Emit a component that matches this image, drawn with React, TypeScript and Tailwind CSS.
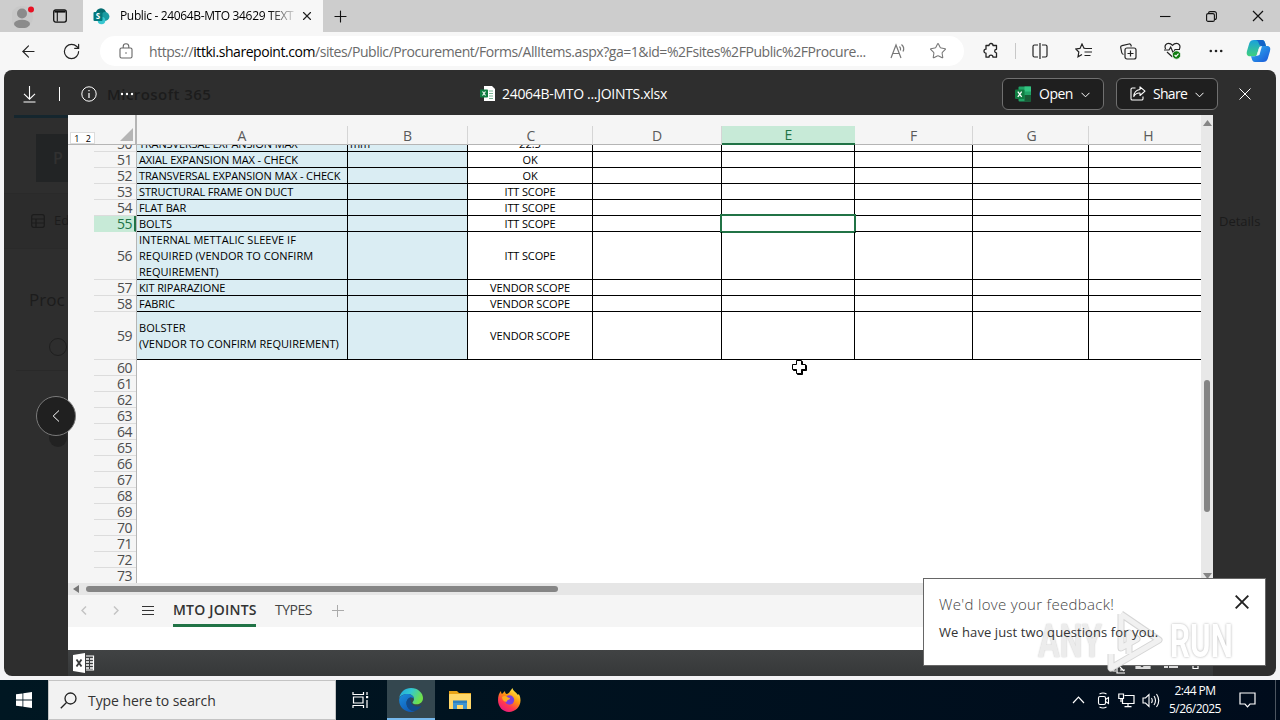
import React from "react";
import { Plus, X, ArrowLeft, RotateCw, Star } from "lucide-react";

const COLS = [
  { id: "A", w: "w-[211px]" },
  { id: "B", w: "w-[120px]" },
  { id: "C", w: "w-[125px]" },
  { id: "D", w: "w-[129px]" },
  { id: "E", w: "w-[133px]" },
  { id: "F", w: "w-[118px]" },
  { id: "G", w: "w-[116px]" },
  { id: "H", w: "w-[112px]" },
];

type Row = { n: number; h: string; a: string[]; b?: string; c: string };

const ROWS: Row[] = [
  { n: 51, h: "h-4", a: ["AXIAL EXPANSION MAX - CHECK"], c: "OK" },
  { n: 52, h: "h-4", a: ["TRANSVERSAL EXPANSION MAX - CHECK"], c: "OK" },
  { n: 53, h: "h-4", a: ["STRUCTURAL FRAME ON DUCT"], c: "ITT SCOPE" },
  { n: 54, h: "h-4", a: ["FLAT BAR"], c: "ITT SCOPE" },
  { n: 55, h: "h-4", a: ["BOLTS"], c: "ITT SCOPE" },
  {
    n: 56,
    h: "h-12",
    a: ["INTERNAL METTALIC SLEEVE IF", "REQUIRED (VENDOR TO CONFIRM", "REQUIREMENT)"],
    c: "ITT SCOPE",
  },
  { n: 57, h: "h-4", a: ["KIT RIPARAZIONE"], c: "VENDOR SCOPE" },
  { n: 58, h: "h-4", a: ["FABRIC"], c: "VENDOR SCOPE" },
  { n: 59, h: "h-12", a: ["BOLSTER", "(VENDOR TO CONFIRM REQUIREMENT)"], c: "VENDOR SCOPE" },
];

const EMPTY = [60, 61, 62, 63, 64, 65, 66, 67, 68, 69, 70, 71, 72, 73];

function SharePointIcon() {
  return (
    <svg width="17" height="17" viewBox="0 0 17 17">
      <circle cx="8" cy="5.5" r="5.2" fill="#036c70" />
      <circle cx="12" cy="8.5" r="4.4" fill="#1a9ba1" />
      <circle cx="8.5" cy="12.5" r="3.8" fill="#37c6d0" />
      <rect x="0.5" y="4" width="9" height="9" rx="1" fill="#03787c" />
      <text x="5" y="11.4" fontSize="8" fontWeight="700" fill="#fff" textAnchor="middle" fontFamily="Open Sans, sans-serif">
        S
      </text>
    </svg>
  );
}

function TabStrip() {
  return (
    <div className="flex h-8 shrink-0 items-stretch bg-[#cdcdcd]">
      <div className="flex w-[83px] items-center rounded-br-md">
        <svg className="ml-3 mt-[-2px]" width="24" height="26" viewBox="0 0 24 26">
          <circle cx="10" cy="15" r="11" fill="#c3c3c3" opacity="0.5" />
          <circle cx="10" cy="11.5" r="5" fill="#8b8b8b" />
          <ellipse cx="10" cy="22" rx="8" ry="4.2" fill="#8b8b8b" />
          <circle cx="19" cy="7.5" r="3" fill="#e81123" />
        </svg>
        <svg className="ml-[17px]" width="14" height="14" viewBox="0 0 14 14" fill="none" stroke="#111" strokeWidth="1.3">
          <rect x="0.7" y="0.9" width="12.6" height="12.2" rx="2" />
          <path d="M1.500 2.500H12.500" strokeWidth="2.200" />
          <path d="M4.300 3V12.500" strokeWidth="1.100" />
        </svg>
      </div>
      <div className="flex w-60 items-center bg-[#f7f7f7] pl-[10px]">
        <SharePointIcon />
        <div className="ml-[10px] w-[175px] overflow-hidden whitespace-nowrap bg-gradient-to-r from-black from-85% to-black/10 bg-clip-text text-[12px] leading-5 tracking-[-0.35px] text-transparent">
          Public - 24064B-MTO 34629 TEXT
        </div>
        <X className="ml-[5px]" size={14} strokeWidth={2} color="#222" />
      </div>
      <div className="flex w-[34px] items-center justify-center">
        <Plus size={19} strokeWidth={1.4} color="#111" />
      </div>
      <div className="flex flex-1 items-center justify-end gap-[35px] pr-[16px]">
        <svg width="11" height="11" viewBox="0 0 11 11" stroke="#111" strokeWidth="1.1">
          <path d="M0 5.500H10.500" />
        </svg>
        <svg width="11" height="11" viewBox="0 0 11 11" fill="none" stroke="#111" strokeWidth="1.1">
          <rect x="0.6" y="2.6" width="7.8" height="7.8" rx="1.5" />
          <path d="M2.6 2.4V2a1.4 1.4 0 0 1 1.4-1.4h4.4a2 2 0 0 1 2 2V7A1.4 1.4 0 0 1 9 8.4" />
        </svg>
        <svg width="12" height="12" viewBox="0 0 12 12" stroke="#111" strokeWidth="1.2">
          <path d="M1 1 11 11M11 1 1 11" />
        </svg>
      </div>
    </div>
  );
}

function CopilotIcon() {
  return (
    <svg width="25" height="24" viewBox="0 0 25 24">
      <defs>
        <linearGradient id="cpA" x1="0" y1="0" x2="0" y2="1">
          <stop offset="0" stopColor="#1aa0dc" />
          <stop offset="1" stopColor="#3fd07d" />
        </linearGradient>
        <linearGradient id="cpB" x1="0" y1="0" x2="1" y2="1">
          <stop offset="0" stopColor="#2fb4f0" />
          <stop offset="1" stopColor="#1a56d8" />
        </linearGradient>
      </defs>
      <path d="M8 1h8c2 0 2.700 1.500 3.200 3.200L20 7h-4c-2 0-2.800 1-3.400 3l-1.500 5c-.5 1.500-1.200 2.300-3 2.300H4C.7 17.300.3 14.500 1 12l2.200-7.500C4 2 5.500 1 8 1z" fill="url(#cpA)" />
      <path d="M8 1h8c2 0 2.700 1.500 3.200 3.200L20 7h-4c-1.500 0-2.300-.4-3-2.300C12.300 2.500 11.500 1 8 1z" fill="#1464c8" />
      <path d="M17 23H9c-2 0-2.700-1.500-3.200-3.200L5 17.300h3.500c2 0 2.800-1 3.400-3l1.500-5c.5-1.500 1.200-2.300 3-2.300H21c3.300 0 3.700 2.500 3 5l-2.200 7.500C21 22 19.500 23 17 23z" fill="url(#cpB)" />
      <path d="M13.500 8 16 7l-2.600 9-2.900 1z" fill="#f7f7f7" />
    </svg>
  );
}

function AddressBar() {
  return (
    <div className="flex h-[38px] shrink-0 items-center bg-[#f7f7f7] pl-[19px]">
      <ArrowLeft size={19} strokeWidth={1.4} color="#222" />
      <RotateCw className="ml-6" size={19} strokeWidth={1.5} color="#222" />
      <div className="ml-[19px] flex h-[30px] w-[864px] items-center rounded-full bg-white pl-[19px]">
        <svg width="14" height="16" viewBox="0 0 14 16" fill="none" stroke="#666" strokeWidth="1.1">
          <rect x="1" y="5" width="12" height="10" rx="1.500" />
          <path d="M4.200 5V3.500a2.800 2.800 0 0 1 5.600 0V5" />
          <circle cx="7" cy="10" r="0.800" fill="#666" stroke="none" />
        </svg>
        <div className="ml-[16px] mt-px w-[720px] whitespace-nowrap text-[14px] leading-5 tracking-[-0.440px] text-[#6a6a6a]">
          https://<span className="text-black">ittki.sharepoint.com</span>
          /sites/Public/Procurement/Forms/AllItems.aspx?ga=1&amp;id=%2Fsites%2FPublic%2FProcure...
        </div>
        <svg className="ml-[21px]" width="17" height="16" viewBox="0 0 17 16" fill="none" stroke="#777" strokeWidth="1.2">
          <path d="M1 15 6 2 11 15M2.800 10.500H9.200M9.500 3.500q1.500 1.500 1 4M11.500 1.500q3.500 3 1.500 7" />
        </svg>
        <Star className="ml-[22px]" size={18} strokeWidth={1.400} color="#777" />
      </div>
      <svg className="ml-[19px]" width="16" height="18" viewBox="0 0 16 18" fill="none" stroke="#222" strokeWidth="1.300">
        <path d="M3 3.500h3a2 2 0 1 1 4 0h3.500v3.800a1.800 1.800 0 1 0 0 3.600v4.300H10a2 2 0 1 0-4 0H3v-4a2 2 0 1 1 0-4z" strokeLinejoin="round" />
      </svg>
      <div className="ml-[16px] h-4 w-px bg-[#c8c8c8]" />
      <svg className="ml-[16px]" width="16" height="16" viewBox="0 0 16 16" fill="none" stroke="#222" strokeWidth="1.200">
        <path d="M6 2H2.500Q1 2 1 3.500v9Q1 14 2.500 14H6M10 2h3.500Q15 2 15 3.500v9q0 1.500-1.500 1.500H10M8 0V16" />
      </svg>
      <svg className="ml-[27px]" width="18" height="16" viewBox="0 0 18 16" fill="none" stroke="#222" strokeWidth="1.200">
        <path d="M10.500 5.500 9 5.200 7 1 5 5.400.8 6l3 3-.8 4.800L7 11.500M10.500 5.500H17M9.500 9H17M9.500 12.500H15.500" />
      </svg>
      <svg className="ml-[27px]" width="17" height="17" viewBox="0 0 17 17" fill="none" stroke="#222" strokeWidth="1.200">
        <path d="M3.500 11.500Q2 11 1.700 9.500L.7 4.500Q.5 3 2 2.700L9 1q1.600-.2 2 1.200l.3 1.300" />
        <rect x="5" y="5" width="11" height="11" rx="2" />
        <path d="M10.500 7.500v6M7.500 10.500h6" />
      </svg>
      <svg className="ml-[27px]" width="18" height="18" viewBox="0 0 18 18" fill="none" stroke="#222" strokeWidth="1.200">
        <path d="M1.600 7C0 3.500 2.300 1.300 4.500 1.300c2 0 3.200 1 4 2 .8-1 2-2 4-2C14.700 1.300 17 3.500 15.400 7M0 8H5l1.700-3 2.600 6L11 7.500h5M3 10l5.500 5" />
        <circle cx="12.500" cy="13" r="4.200" fill="#107c10" stroke="#f7f7f7" strokeWidth="0.800" />
        <path d="M10.600 13l1.400 1.400 2.500-2.700" stroke="#fff" />
      </svg>
      <svg className="ml-[27px]" width="14" height="4" viewBox="0 0 14 4" fill="#222">
        <circle cx="1.800" cy="2" r="1.300" />
        <circle cx="7" cy="2" r="1.300" />
        <circle cx="12.200" cy="2" r="1.300" />
      </svg>
      <div className="ml-[23px]">
        <CopilotIcon />
      </div>
    </div>
  );
}

function Chevron() {
  return (
    <svg className="mt-[2px]" width="9" height="6" viewBox="0 0 9 6" fill="none" stroke="#fff" strokeWidth="1">
      <path d="M.5.8 4.500 4.800 8.500.8" />
    </svg>
  );
}

function ViewerHeader() {
  return (
    <div className="relative flex h-[45px] shrink-0 items-center pt-[2px] text-white">
      <div className="absolute left-[103px] top-[12px] text-[15px] font-semibold leading-6 tracking-[0.450px] text-[#1c1c1c]">
        Microsoft 365
      </div>
      <div className="relative flex w-[476px] items-center pl-[19px]">
        <svg width="13" height="18" viewBox="0 0 13 18" fill="none" stroke="#fff" strokeWidth="1.100">
          <path d="M6.500 1V14M1 8.800 6.500 14.200 12 8.800M.5 17H12.500" />
        </svg>
        <div className="ml-[23px] h-[14px] w-px bg-white" />
        <svg className="ml-[21px]" width="16" height="16" viewBox="0 0 16 16" fill="none" stroke="#fff" strokeWidth="1">
          <circle cx="8" cy="8" r="7.200" />
          <path d="M8 7v5M8 4v1.300" strokeWidth="1.200" />
        </svg>
        <svg className="ml-[23px]" width="14" height="4" viewBox="0 0 14 4" fill="#fff">
          <circle cx="2" cy="2" r="1.200" />
          <circle cx="7" cy="2" r="1.200" />
          <circle cx="12" cy="2" r="1.200" />
        </svg>
      </div>
      <svg width="15" height="15" viewBox="0 0 15 15">
        <path d="M4 0h8l3 3v12H4z" fill="#fff" />
        <path d="M9 5h4M9 7.500h4M9 10h4M9 12.500h4" stroke="#7ab795" strokeWidth="1" />
        <rect x="0" y="3.500" width="8" height="8" rx="0.800" fill="#107c41" />
        <path d="M2.500 5.500 5.500 9.500M5.500 5.500 2.500 9.500" stroke="#fff" strokeWidth="1.100" />
      </svg>
      <div className="ml-[7px] mt-[1px] w-[200px] whitespace-nowrap text-[14px] leading-5 tracking-[-0.300px]">
        24064B-MTO ...JOINTS.xlsx
      </div>
      <div className="flex-1" />
      <div className="flex h-8 w-[102px] items-center rounded-md border border-[#707070] bg-[#1f1f1f] pl-[12px]">
        <svg width="16" height="16" viewBox="0 0 16 16">
          <rect x="3.500" y="0.500" width="12.500" height="15" rx="1" fill="#21a366" />
          <rect x="9.500" y="0.500" width="6.500" height="5" fill="#33c481" />
          <rect x="9.500" y="9" width="6.500" height="6.500" fill="#185c37" />
          <rect x="0" y="3.500" width="9.500" height="9.500" rx="1" fill="#107c41" />
          <path d="M2.800 5.700 6.700 10.800M6.700 5.700 2.800 10.800" stroke="#fff" strokeWidth="1.300" />
        </svg>
        <span className="ml-[8px] w-[42px] text-[14px] leading-5 tracking-[-0.500px]">Open</span>
        <Chevron />
      </div>
      <div className="ml-3 flex h-8 w-[102px] items-center rounded-md border border-[#707070] bg-[#1f1f1f] pl-[13px]">
        <svg width="16" height="15" viewBox="0 0 16 15" fill="none" stroke="#fff" strokeWidth="1.100">
          <path d="M5.500 2H2.300Q1 2 1 3.300v9.400Q1 14 2.300 14h9.400Q13 14 13 12.700V10.500" />
          <path d="M10 .8 15 5.200 10 9.500V7Q6 6.500 3.800 10.500 4 4.500 10 3.500z" strokeLinejoin="round" />
        </svg>
        <span className="ml-[7px] w-[42px] text-[14px] leading-5 tracking-[-0.700px]">Share</span>
        <Chevron />
      </div>
      <svg className="ml-[21px] mr-[25px]" width="12" height="12" viewBox="0 0 12 12" stroke="#fff" strokeWidth="1">
        <path d="M.5.5 11.500 11.500M11.500.5.5 11.500" />
      </svg>
    </div>
  );
}

function LeftGutter() {
  return (
    <div className="flex w-16 shrink-0 flex-col overflow-hidden text-[#1c1c1c]">
      <div className="ml-[10px] h-[3px] bg-[#15262e]" />
      <div className="ml-8 mt-4 flex h-12 items-center bg-[#222425] pl-[17px] text-[16px] font-semibold text-[#313131]">
        P
      </div>
      <div className="mt-[11px] flex h-14 items-center whitespace-nowrap border-y border-[#2a2a2a] bg-[#2c2c2c] pl-[27px] text-[13px]">
        <svg className="mr-[9px] shrink-0" width="14" height="14" viewBox="0 0 14 14" fill="none" stroke="#1c1c1c" strokeWidth="1.200">
          <rect x="0.700" y="0.700" width="12.600" height="12.600" rx="2" />
          <path d="M1 5h12M1 9h12M5 5v8" />
        </svg>
        Ed
      </div>
      <div className="ml-[25px] mt-[39px] text-[17px] leading-6">Proc</div>
      <div className="ml-[45px] mt-[26px] size-[18px] shrink-0 rounded-full border border-[#1f1f1f]" />
      <div className="ml-3 mt-[14px] h-px shrink-0 bg-[#292929]" />
      <div className="ml-[45px] mt-[58px] size-[18px] shrink-0 rounded-full bg-[#222]" />
    </div>
  );
}

function RowLabel({ n, h, selected }: { n: number; h: string; selected?: boolean }) {
  return (
    <div className="flex w-[69px] shrink-0 border-r border-[#b5b5b5] bg-[#f5f5f5] pl-[26px]">
      <div
        className={
          "flex flex-1 items-center justify-end border-b text-[14px] leading-4 tracking-[-0.500px] " +
          h +
          (selected
            ? " border-r-2 border-b-[#c7ead7] border-r-[#217346] bg-[#c7ead7] pr-[2px] text-[#217346]"
            : " border-[#dcdcdc] pr-[4px] text-[#4d4d4d]")
        }
      >
        {n}
      </div>
    </div>
  );
}

function DataRow({ row }: { row: Row }) {
  const tall = row.a.length > 1;
  return (
    <div className={"flex shrink-0 " + row.h}>
      <RowLabel n={row.n} h={row.h} selected={row.n === 55} />
      {COLS.map((c, i) => (
        <div
          key={c.id}
          className={
            "relative flex shrink-0 flex-col justify-center whitespace-nowrap border-b border-black text-[11px] leading-4 text-black " +
            c.w +
            (i < 7 ? " border-r" : "") +
            (i < 2 ? " bg-[#daedf3] pl-[2px]" : " items-center")
          }
        >
          {i === 0 &&
            row.a.map((t) => (
              <div key={t} className={tall ? "tracking-[0.030px]" : "tracking-[-0.130px]"}>
                {t}
              </div>
            ))}
          {i === 1 && row.b}
          {i === 2 && <div className="tracking-[-0.130px]">{row.c}</div>}
          {i === 4 && row.n === 55 && (
            <div className="absolute -left-[2px] -top-[2px] h-[19px] w-[136px] border-2 border-[#217346]" />
          )}
        </div>
      ))}
    </div>
  );
}

function Sheet() {
  return (
    <div className="flex h-[468px] shrink-0">
      <div className="flex w-[1133px] flex-col overflow-hidden bg-white">
        <div className="flex h-[30px] shrink-0 items-end bg-[#f5f5f5]">
          <div className="flex h-full w-[69px] items-end border-b border-r-2 border-[#b5b5b5]">
            <div className="ml-[2px] flex h-[12px] w-[25px] items-center justify-around border border-[#dcdcdc] bg-white text-[9px] leading-none text-black">
              <span>1</span>
              <span>2</span>
            </div>
            <svg className="mb-[3px] ml-[25px]" width="13" height="13" viewBox="0 0 13 13">
              <path d="M13 0V13H0z" fill="#b5b5b5" />
            </svg>
          </div>
          {COLS.map((c, i) => (
            <div
              key={c.id}
              className={
                "flex h-[19px] shrink-0 items-center justify-center pt-px text-[14px] leading-4 " +
                c.w +
                (i === 4
                  ? " border-b-2 border-[#217346] bg-[#c7ead7] text-[#217346]"
                  : " border-b border-b-[#b5b5b5] text-[#5a5a5a]") +
                (i < 7 && i !== 4 ? " border-r border-r-[#d5d5d5]" : "") +
                (i === 7 ? " pl-[7px]" : i === 2 || i === 6 ? " pl-[2px]" : "")
              }
            >
              {c.id}
            </div>
          ))}
        </div>
        <div className="flex h-[7px] shrink-0 items-end overflow-hidden">
          <RowLabel n={50} h="h-4" />
          {COLS.map((c, i) => (
            <div
              key={c.id}
              className={
                "h-4 shrink-0 whitespace-nowrap border-b border-black text-[11px] leading-4 text-black " +
                c.w +
                (i < 7 ? " border-r" : "") +
                (i < 2 ? " bg-[#daedf3] pl-[2px] tracking-[-0.120px]" : " text-center")
              }
            >
              {i === 0 ? "TRANSVERSAL EXPANSION MAX" : i === 1 ? "mm" : i === 2 ? "22.5" : ""}
            </div>
          ))}
        </div>
        {ROWS.map((r) => (
          <DataRow key={r.n} row={r} />
        ))}
        {EMPTY.map((n) => (
          <div key={n} className="flex h-4 shrink-0">
            <RowLabel n={n} h="h-4" />
          </div>
        ))}
      </div>
      <div className="flex w-3 flex-col items-center bg-[#e8e8e8] pt-[5px]">
        <svg width="9" height="6" viewBox="0 0 9 6">
          <path d="M4.500 0 9 6H0z" fill="#858585" />
        </svg>
        <div className="mt-[254px] h-[132px] w-[6px] rounded-full bg-[#858585]" />
        <svg className="mt-[61px]" width="9" height="6" viewBox="0 0 9 6">
          <path d="M4.500 6 9 0H0z" fill="#858585" />
        </svg>
      </div>
    </div>
  );
}

function SheetFooter() {
  return (
    <>
      <div className="flex h-3 shrink-0 items-center bg-[#e6e6e6] pl-[5px]">
        <svg width="6" height="8" viewBox="0 0 6 8">
          <path d="M0 4 6 0V8z" fill="#777" />
        </svg>
        <div className="ml-[7px] h-[6px] w-[472px] rounded-full bg-[#858585]" />
      </div>
      <div className="flex h-8 shrink-0 bg-[#f5f5f5] text-[14px] text-[#444]">
        <svg className="ml-[13px] mt-[11px]" width="6" height="9" viewBox="0 0 6 9" fill="none" stroke="#c4c4c4" strokeWidth="1.500">
          <path d="M5 .5 1 4.500 5 8.500" />
        </svg>
        <svg className="ml-[26px] mt-[11px]" width="6" height="9" viewBox="0 0 6 9" fill="none" stroke="#c4c4c4" strokeWidth="1.500">
          <path d="M1 .5 5 4.500 1 8.500" />
        </svg>
        <svg className="ml-[23px] mt-[10px]" width="12" height="11" viewBox="0 0 12 11" stroke="#333" strokeWidth="1">
          <path d="M0 1.500H12M0 5.500H12M0 9.500H12" />
        </svg>
        <div className="ml-[19px] h-8 w-[83px] whitespace-nowrap border-b-[3px] border-[#217346] text-[14px] font-semibold leading-[30px] tracking-[0.220px] text-[#333]">
          MTO JOINTS
        </div>
        <div className="ml-[19px] w-[38px] leading-[30px] tracking-[-0.500px]">TYPES</div>
        <svg className="ml-[19px] mt-[10px]" width="12" height="12" viewBox="0 0 12 12" stroke="#aaa">
          <path d="M5.500 0V12M0 5.500H12" />
        </svg>
      </div>
      <div className="h-[23px] shrink-0 bg-white" />
      <div className="flex flex-1 items-center bg-gradient-to-b from-[#414344] to-[#363839] pl-[5px]">
        <svg width="22" height="20" viewBox="0 0 22 20">
          <path d="M0 2 12 0V20L0 18z" fill="#fff" />
          <path d="M13 3h7.500v14H13" fill="none" stroke="#fff" strokeWidth="1.200" />
          <path d="M13 6h7M13 9h7M13 12h7M13 15h7" stroke="#fff" strokeWidth="1.600" strokeDasharray="3 1" />
          <path d="M3.500 6.500 8.500 13.500M8.500 6.500 3.500 13.500" stroke="#3a3c3d" strokeWidth="1.900" />
        </svg>
        <svg className="ml-[1016px] mt-3" width="94" height="9" viewBox="0 0 94 9" fill="none" stroke="#fff" strokeWidth="1.200">
          <path d="M2 0v6h3M6 0v8h8M9 2l4 4M9 5h5" />
          <path d="M25 1.500h4l2 2 2-2h6v2H25z" fill="#ddd" stroke="#ddd" />
          <path d="M53 2h4M58 2h9" strokeWidth="2" stroke="#ddd" />
          <path d="M82 0v3.500h5V0" />
        </svg>
      </div>
    </>
  );
}

function FeedbackCard() {
  return <div className="absolute left-[923px] top-[578px] h-[88px] w-[343px] border border-[#666] bg-white" />;
}

function FeedbackText() {
  return (
    <div className="absolute left-[923px] top-[578px] h-[88px] w-[343px] pl-4 pt-[14px]">
      <div className="whitespace-nowrap text-[15px] font-light leading-6 tracking-[0.320px] text-[#444]">
        We'd love your feedback!
      </div>
      <div className="mt-[6px] whitespace-nowrap text-[13px] leading-5 tracking-[0.100px] text-[#333]">
        We have just two questions for you.
      </div>
      <svg className="absolute right-[17px] top-[17px]" width="14" height="14" viewBox="0 0 14 14" stroke="#222" strokeWidth="1.900">
        <path d="M.7.700 13.300 13.300M13.300.700.700 13.300" />
      </svg>
    </div>
  );
}

function Watermark() {
  return (
    <div className="absolute left-[1038px] top-[609px] flex h-[64px] w-[196px] items-center justify-between">
      <div className="w-[62px]">
        <div className="origin-left scale-x-[0.700] text-[46px] font-bold leading-[64px] text-[#ececec] [font-family:Roboto,sans-serif] [text-shadow:0_0_2px_#c4c4c4]">
          ANY
        </div>
      </div>
      <svg width="56" height="62" viewBox="0 0 56 62" fill="none" strokeLinejoin="round">
        <path d="M14 4 52 30 4 58V44M14 4V38L30 29 22 23V44" stroke="#d6d6d6" strokeWidth="7" />
        <path d="M14 4 52 30 4 58V44M14 4V38L30 29 22 23V44" stroke="#f1f1f1" strokeWidth="5" />
      </svg>
      <div className="w-[64px]">
        <div className="origin-left scale-x-[0.680] text-[46px] font-bold leading-[64px] text-white [font-family:Roboto,sans-serif] [text-shadow:0_0_3px_#aaa]">
          RUN
        </div>
      </div>
    </div>
  );
}

function Viewer() {
  return (
    <div className="flex h-[610px] shrink-0 bg-[#f3f3f5] px-1 pb-1">
      <div className="flex w-full flex-col overflow-hidden rounded-lg bg-[#2e2e2e]">
        <ViewerHeader />
        <div className="flex flex-1">
          <LeftGutter />
          <div className="flex w-[1145px] shrink-0 flex-col">
            <Sheet />
            <SheetFooter />
          </div>
          <div className="flex-1 pl-[6px] pt-[97px] text-[13px] text-[#1b1b1b]">Details</div>
        </div>
      </div>
    </div>
  );
}

function Taskbar() {
  return (
    <div className="flex h-10 shrink-0 items-stretch bg-gradient-to-r from-[#001722] to-[#000c1c] text-white">
      <div className="flex w-12 items-center justify-center">
        <svg width="16" height="16" viewBox="0 0 16 16" fill="#fff">
          <path d="M0 2.300 6.500 1.400V7.600H0zM7.300 1.300 16 0V7.600H7.300zM0 8.400H6.500V14.600L0 13.700zM7.300 8.400H16V16L7.300 14.700z" />
        </svg>
      </div>
      <div className="flex w-72 items-center border border-[#c4c4c4] bg-[#f2f2f2] pl-[11px] text-[#333]">
        <svg width="17" height="17" viewBox="0 0 17 17" fill="none" stroke="#222" strokeWidth="1.300">
          <circle cx="10.500" cy="6.500" r="5.500" />
          <path d="M6.500 10.500.8 16.200" />
        </svg>
        <span className="ml-[11px] mt-[2px] whitespace-nowrap text-[14px] leading-5 tracking-[-0.060px]">Type here to search</span>
      </div>
      <div className="flex w-[51px] items-center justify-center">
        <svg className="mr-[3px]" width="17" height="16" viewBox="0 0 17 16" fill="none" stroke="#fff" strokeWidth="1.200">
          <path d="M1 0V2.500H11.500V0M1 16V13.500H11.500V16M1.500 5H11v6H1.500zM15 0v3M15 8v8" />
          <rect x="14" y="4" width="2.200" height="2.200" fill="#fff" stroke="none" />
        </svg>
      </div>
      <div className="flex w-12 items-center justify-center border-b-2 border-[#76b9ed] bg-[#34474f]">
        <svg className="mt-[2px]" width="24" height="24" viewBox="0 0 24 24">
          <defs>
            <linearGradient id="edA" x1="0" y1="0" x2="1" y2="0.400">
              <stop offset="0" stopColor="#1fa5e0" />
              <stop offset="0.500" stopColor="#33c8d0" />
              <stop offset="1" stopColor="#6fe04a" />
            </linearGradient>
            <linearGradient id="edB" x1="0" y1="0" x2="0.600" y2="1">
              <stop offset="0" stopColor="#1b8ddc" />
              <stop offset="1" stopColor="#0f5cb8" />
            </linearGradient>
          </defs>
          <path d="M.3 10C1.200 4 6 0 12 0c7 0 12 5 12 10 0 4-3 6.300-6.500 6.300-2.700 0-4-.8-4-1.800 0-.6 1.500-1.500 1.500-3.500C15 8 12 6 8.500 6 5 6 1.500 7.500.3 10z" fill="url(#edA)" />
          <path d="M.2 11C1 8 4.500 6 8.500 6 12 6 15 8 15 11c-.5-1-1.500-1.500-3-1.500-2.500 0-4.500 2.500-4.500 5.500 0 4.500 3.500 8 8.500 8-1.200.7-2.700 1-4 1C5.500 24-.6 18.500.2 11z" fill="url(#edB)" />
          <path d="M7.500 15c0-3 2-5.500 4.500-5.500-1.500 2-.5 8.500 6 9 2 .1 3.500-.5 4.500-1-1 2.300-3.500 4.500-6.500 5.500-5 0-8.500-3.500-8.500-8z" fill="#114a8b" />
        </svg>
      </div>
      <div className="flex w-[50px] items-center justify-center">
        <svg width="22" height="18" viewBox="0 0 22 18">
          <path d="M0 0H8L10 2H22V6H0z" fill="#e8a317" />
          <rect x="0" y="3" width="22" height="15" rx="0.500" fill="#ffd769" />
          <path d="M4 18V10.500H18V18H14V14H8V18z" fill="#3f94cf" />
          <rect x="4" y="9.500" width="14" height="2.500" fill="#2b7fbf" />
        </svg>
      </div>
      <div className="flex w-12 items-center justify-center">
        <svg width="24" height="24" viewBox="0 0 24 24">
          <defs>
            <linearGradient id="ffA" x1="0.800" y1="0" x2="0.200" y2="1">
              <stop offset="0" stopColor="#fff44f" />
              <stop offset="0.400" stopColor="#ff980e" />
              <stop offset="0.700" stopColor="#ff3750" />
              <stop offset="1" stopColor="#e31587" />
            </linearGradient>
          </defs>
          <path d="M1 12C1 8 2 5 4 3c0 1.500.5 2.500 1 3C6 5 7 4 8 3c0 1.500.5 2.500 1.500 3C12 6 13 3 15.500 0c.5 3 3.500 4 5.500 7l.8-1C23 8 23.500 10 23.500 12.500 23.500 19 18 24 12 24S1 19 1 12z" fill="url(#ffA)" />
          <circle cx="12.500" cy="12" r="4.700" fill="#7a3fe0" />
          <path d="M5 9C7 7.500 9.500 8 11 9.500c1 .2 2 .3 2 1-.5 1.500-3 1-3.500 3.500C7 13.500 5 12 5 9z" fill="#ffac1e" />
        </svg>
      </div>
      <div className="flex-1" />
      <div className="flex items-center">
        <svg width="13" height="8" viewBox="0 0 13 8" fill="none" stroke="#fff" strokeWidth="1.200">
          <path d="M1 7 6.500 1.200 12 7" />
        </svg>
        <svg className="ml-[12px]" width="13" height="17" viewBox="0 0 13 17" fill="none" stroke="#fff" strokeWidth="1.100">
          <rect x="1.500" y="4.500" width="7" height="8" rx="1.500" />
          <path d="M8.500 7.500 11.500 5.500V11.500L8.500 9.500M2.500 2Q6 0 9.500 2M2.500 15q3.500 2 7 0" />
        </svg>
        <svg className="ml-[8px]" width="17" height="15" viewBox="0 0 17 15" fill="none" stroke="#fff" strokeWidth="1.200">
          <path d="M6.500 2.500H16V10.500H4.500V6M10 10.500V13.500M6.500 13.700H13.500" />
          <path d="M.8 1H5.500V5.500H.8zM3 5.500V9" />
        </svg>
        <svg className="ml-[7px]" width="18" height="15" viewBox="0 0 18 15" fill="none" stroke="#fff" strokeWidth="1.100">
          <path d="M1 5H3.500L7 1.500V13.500L3.500 10H1zM9.500 5q1.500 2.500 0 5M12 3q3 4.500 0 9M14.500 1q4.500 6.500 0 13" />
        </svg>
      </div>
      <div className="w-[70px] pt-[2px] text-center text-[12px] leading-[18px] tracking-[-0.550px]">
        <div>2:44 PM</div>
        <div>5/26/2025</div>
      </div>
      <div className="flex w-[46px] items-center justify-center border-r border-[#4c5560]">
        <svg className="mr-[10px]" width="17" height="16" viewBox="0 0 17 16" fill="none" stroke="#fff" strokeWidth="1.200">
          <path d="M1 1H16V12H11L8.500 14.800 6 12H1z" />
        </svg>
      </div>
      <div className="w-1" />
    </div>
  );
}

export default function App() {
  return (
    <div className="relative flex h-[720px] w-[1280px] flex-col overflow-hidden [font-family:'Open_Sans','Noto_Sans',sans-serif]">
      <TabStrip />
      <AddressBar />
      <Viewer />
      <Taskbar />
      <div className="absolute left-[36px] top-[396px] flex size-10 items-center justify-center rounded-full border border-[#7a7a7a] bg-[#202020]">
        <svg width="8" height="12" viewBox="0 0 8 12" fill="none" stroke="#fff" strokeWidth="1">
          <path d="M7 .5 1.200 6 7 11.500" />
        </svg>
      </div>
      <svg className="absolute left-[791px] top-[359px]" width="17" height="17" viewBox="0 0 17 17">
        <path d="M6.500 2.500h5v4h4v5h-4v4h-5v-4h-4v-5h4z" fill="#000" stroke="#000" />
        <path d="M5.500 1.500h5v4h4v5h-4v4h-5v-4h-4v-5h4z" fill="#fff" stroke="#000" strokeWidth="1" />
      </svg>
      <FeedbackCard />
      <Watermark />
      <FeedbackText />
    </div>
  );
}
